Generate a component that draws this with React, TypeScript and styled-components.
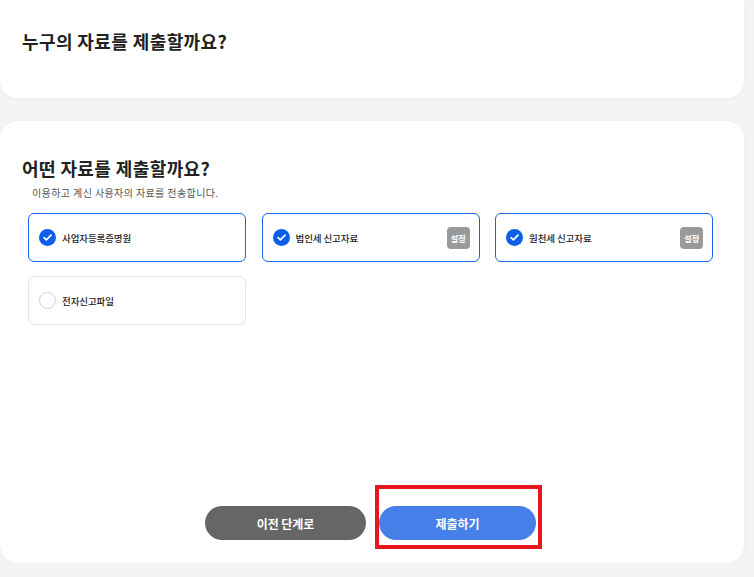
import styled, { createGlobalStyle } from 'styled-components'

const GlobalStyle = createGlobalStyle`
  html, body {
    margin: 0;
    padding: 0;
    background: #f4f4f4;
    font-family: 'Noto Sans CJK KR', 'Noto Sans', sans-serif;
    color: #222;
  }
`

type Option = { label: string; checked: boolean; setting?: boolean }

const options: Option[] = [
  { label: '사업자등록증명원', checked: true },
  { label: '법인세 신고자료', checked: true, setting: true },
  { label: '원천세 신고자료', checked: true, setting: true },
  { label: '전자신고파일', checked: false },
]

export default function App() {
  return (
    <>
      <GlobalStyle />
      <Page>
        <TopCard>
          <Title>누구의 자료를 제출할까요?</Title>
        </TopCard>

        <MainCard>
          <Title>어떤 자료를 제출할까요?</Title>
          <Subtitle>이용하고 계신 사용자의 자료를 전송합니다.</Subtitle>

          <OptionGrid>
            {options.map((opt) => (
              <OptionCard key={opt.label} $checked={opt.checked}>
                <CheckCircle $checked={opt.checked}>
                  {opt.checked && (
                    <svg width="9" height="7" viewBox="0 0 9 7" fill="none">
                      <path
                        d="M1 3.6L3.4 5.8L8 1.2"
                        stroke="#fff"
                        strokeWidth="1.7"
                        strokeLinecap="round"
                        strokeLinejoin="round"
                      />
                    </svg>
                  )}
                </CheckCircle>
                <OptionLabel>{opt.label}</OptionLabel>
                {opt.setting && <SettingBadge>설정</SettingBadge>}
              </OptionCard>
            ))}
          </OptionGrid>

          <ButtonRow>
            <PrevButton>이전 단계로</PrevButton>
            <Highlight>
              <SubmitButton>제출하기</SubmitButton>
              <RedMark />
            </Highlight>
          </ButtonRow>
        </MainCard>
      </Page>
    </>
  )
}

const Page = styled.div`
  width: 744px;
  display: flex;
  flex-direction: column;
  gap: 23px;
`

const Card = styled.section`
  background: #fff;
  border-radius: 18px;
  box-shadow: 0 0 8px rgba(0, 0, 0, 0.03);
  padding: 0 22px;
`

const TopCard = styled(Card)`
  border-top-left-radius: 0;
  border-top-right-radius: 0;
  padding-top: 29px;
  padding-bottom: 44px;
`

const MainCard = styled(Card)`
  height: 442px;
  box-sizing: border-box;
  padding-top: 35px;
  padding-bottom: 23px;
  display: flex;
  flex-direction: column;
`

const Title = styled.h2`
  margin: 0;
  font-size: 18px;
  line-height: 25px;
  font-weight: 700;
  letter-spacing: 0.4px;
  color: #222;
`

const Subtitle = styled.p`
  margin: 5px 0 0 10px;
  font-size: 10px;
  line-height: 14px;
  letter-spacing: 0.4px;
  color: #555;
`

const OptionGrid = styled.div`
  margin: 13px 0 0 6px;
  width: 685px;
  display: grid;
  grid-template-columns: repeat(3, 218px);
  column-gap: 15.5px;
  row-gap: 14px;
`

const OptionCard = styled.div<{ $checked: boolean }>`
  height: 49px;
  box-sizing: border-box;
  border: 1px solid ${(p) => (p.$checked ? '#1666e6' : '#e6e6e6')};
  border-radius: 6px;
  padding: 0 9px 0 10px;
  display: flex;
  align-items: center;
  gap: 6px;
`

const CheckCircle = styled.span<{ $checked: boolean }>`
  width: 17px;
  height: 17px;
  box-sizing: border-box;
  border-radius: 50%;
  flex-shrink: 0;
  display: flex;
  align-items: center;
  justify-content: center;
  background: ${(p) => (p.$checked ? '#0c5fe8' : '#fff')};
  border: ${(p) => (p.$checked ? 'none' : '1px solid #d2d2d2')};
`

const OptionLabel = styled.span`
  flex: 1;
  font-size: 9.5px;
  font-weight: 500;
  letter-spacing: -0.1px;
  color: #222;
`

const SettingBadge = styled.span`
  width: 23px;
  height: 22px;
  border-radius: 4px;
  background: #9a9a9a;
  color: #fff;
  font-size: 8.5px;
  font-weight: 700;
  letter-spacing: -0.2px;
  display: flex;
  align-items: center;
  justify-content: center;
`

const ButtonRow = styled.div`
  margin-top: auto;
  padding-right: 3px;
  display: flex;
  justify-content: center;
  gap: 13px;
`

const PillButton = styled.button`
  height: 34px;
  border: none;
  border-radius: 17px;
  color: #fff;
  font-family: inherit;
  font-size: 12px;
  font-weight: 700;
  letter-spacing: -0.1px;
  cursor: pointer;
`

const PrevButton = styled(PillButton)`
  width: 161px;
  background: #666;
`

const SubmitButton = styled(PillButton)`
  width: 157px;
  background: #467fe7;
`

const Highlight = styled.span`
  position: relative;
  display: flex;
`

const RedMark = styled.span`
  position: absolute;
  left: -4px;
  right: -6px;
  top: -21px;
  bottom: -9px;
  border: 4px solid #e8161f;
  pointer-events: none;
`
